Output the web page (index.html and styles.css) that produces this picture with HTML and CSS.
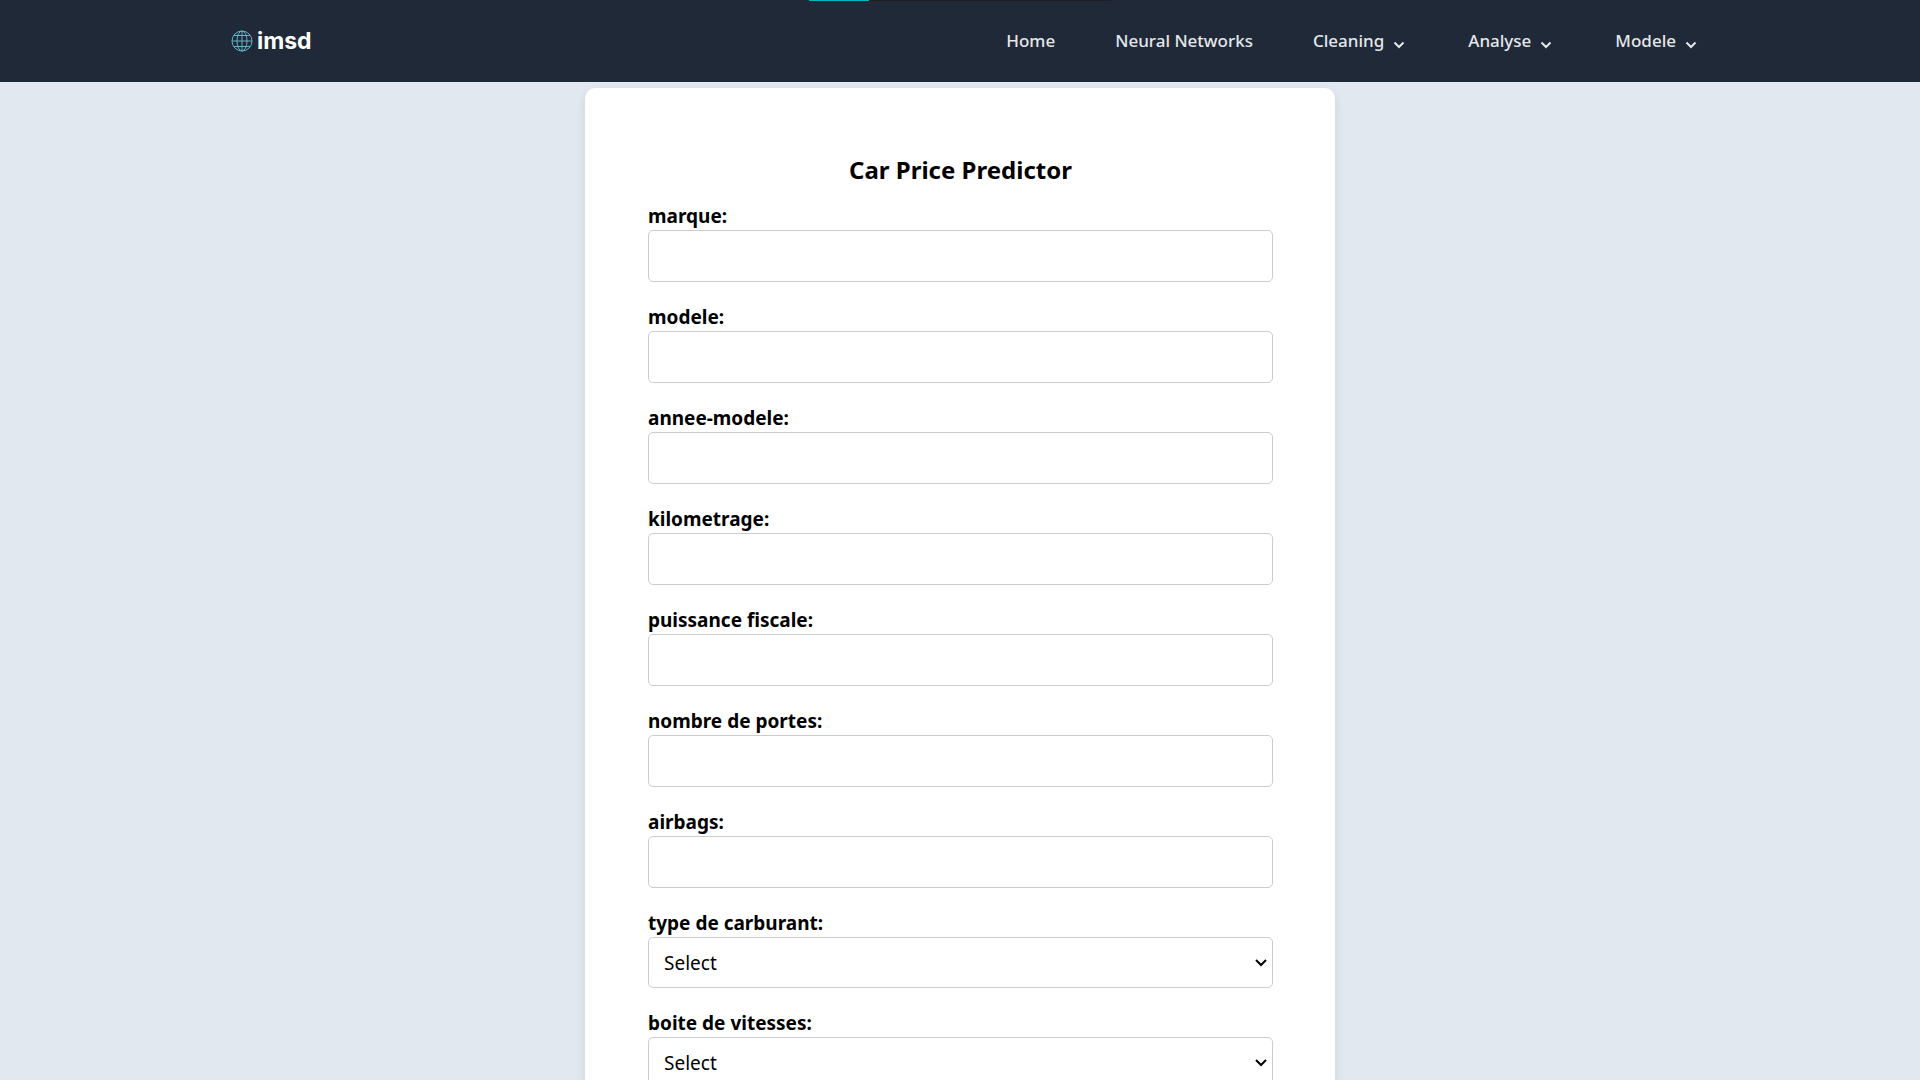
FILE: index.html
```html
<!DOCTYPE html>
<html lang="fr">
<head>
<meta charset="utf-8">
<meta name="viewport" content="width=device-width, initial-scale=1">
<title>Car Price Predictor</title>
<link rel="stylesheet" href="styles.css">
</head>
<body>
<header class="navbar">
  <div class="progress" aria-hidden="true"><div class="progress-done"></div></div>
  <div class="navbar-inner">
    <a class="logo" href="#">
      <svg class="globe" viewBox="0 0 22 22" aria-hidden="true"><circle cx="11" cy="11" r="10"/><ellipse cx="11" cy="11" rx="5" ry="10"/><path d="M11 1v20M1 11h20M3 5.500h16M3 16.500h16"/></svg>
      <span>imsd</span>
    </a>
    <nav class="links">
      <a href="#">Home</a>
      <a href="#">Neural Networks</a>
      <a href="#">Cleaning<svg class="caret" viewBox="0 0 18 18" aria-hidden="true"><path d="M4.500 10.500 9 15l4.500-4.500"/></svg></a>
      <a href="#">Analyse<svg class="caret" viewBox="0 0 18 18" aria-hidden="true"><path d="M4.500 10.500 9 15l4.500-4.500"/></svg></a>
      <a href="#">Modele<svg class="caret" viewBox="0 0 18 18" aria-hidden="true"><path d="M4.500 10.500 9 15l4.500-4.500"/></svg></a>
    </nav>
  </div>
</header>
<main class="page">
  <form class="card">
    <h1 class="title">Car Price Predictor</h1>
    <div class="field"><label for="marque">marque:</label><input class="control" type="text" id="marque"></div>
    <div class="field"><label for="modele">modele:</label><input class="control" type="text" id="modele"></div>
    <div class="field"><label for="annee">annee-modele:</label><input class="control" type="text" id="annee"></div>
    <div class="field"><label for="kilometrage">kilometrage:</label><input class="control" type="text" id="kilometrage"></div>
    <div class="field"><label for="puissance">puissance fiscale:</label><input class="control" type="text" id="puissance"></div>
    <div class="field"><label for="portes">nombre de portes:</label><input class="control" type="text" id="portes"></div>
    <div class="field"><label for="airbags">airbags:</label><input class="control" type="text" id="airbags"></div>
    <div class="field"><label for="carburant">type de carburant:</label>
      <div class="select"><select class="control" id="carburant"><option>Select</option></select><svg class="arrow" viewBox="0 0 12 8" aria-hidden="true"><path d="M1 1l5 5 5-5"/></svg></div></div>
    <div class="field"><label for="boite">boite de vitesses:</label>
      <div class="select"><select class="control" id="boite"><option>Select</option></select><svg class="arrow" viewBox="0 0 12 8" aria-hidden="true"><path d="M1 1l5 5 5-5"/></svg></div></div>
  </form>
</main>
</body>
</html>
```
FILE: styles.css
```css
* { box-sizing: border-box; }
html { scrollbar-width: none; }
body {
  margin: 0;
  background: #e2e8f0;
  color: #000;
  font-family: "Noto Sans", "Open Sans", sans-serif;
  font-size: 19px;
}
.navbar { position: relative; background: #1f2937; }
.navbar-inner {
  display: flex;
  align-items: center;
  justify-content: space-between;
  max-width: 1480px;
  min-height: 82px;
  margin: 0 auto;
}
.progress {
  position: absolute;
  top: 0;
  left: 50%;
  width: 302px;
  height: 1px;
  margin-left: -151px;
  background: #202020;
}
.progress-done { width: 20%; height: 1px; background: #00b7c3; }
.logo {
  display: flex;
  align-items: center;
  gap: 4px;
  padding-left: 11px;
  color: #fff;
  font: 700 23px/24px Inter, sans-serif;
  text-decoration: none;
}
.globe { width: 22px; height: 22px; fill: none; stroke: #5fb4c6; }
.links { display: flex; gap: 60px; }
.links a {
  display: flex;
  align-items: center;
  gap: 6px;
  color: #e5e7eb;
  font-size: 17px;
  font-weight: 500;
  line-height: 24px;
  text-decoration: none;
}
.caret { width: 18px; height: 18px; fill: none; stroke: currentColor; stroke-width: 2; }
.page { padding: 6px 16px 40px; }
.card {
  max-width: 750px;
  margin: 0 auto;
  padding: 64px 62px 64px 63px;
  border-radius: 10px;
  background: #fff;
  box-shadow: 0 4px 10px rgba(0, 0, 0, 0.1);
}
.title { margin: 0 0 14px; font-size: 24px; font-weight: 700; line-height: 36px; text-align: center; }
.field { margin-bottom: 21px; }
.field label { display: block; font-weight: 700; line-height: 28px; }
.control {
  display: block;
  width: 100%;
  height: 52px;
  padding: 0 15px;
  border: 1px solid #ccc;
  border-radius: 5px;
  background: #fff;
  color: #000;
  font: inherit;
  appearance: none;
}
.select { position: relative; }
.select .control { height: 51px; }
.arrow {
  position: absolute;
  top: 22px;
  right: 6px;
  width: 12px;
  height: 8px;
  fill: none;
  stroke: #000;
  stroke-width: 2;
  pointer-events: none;
}
```
